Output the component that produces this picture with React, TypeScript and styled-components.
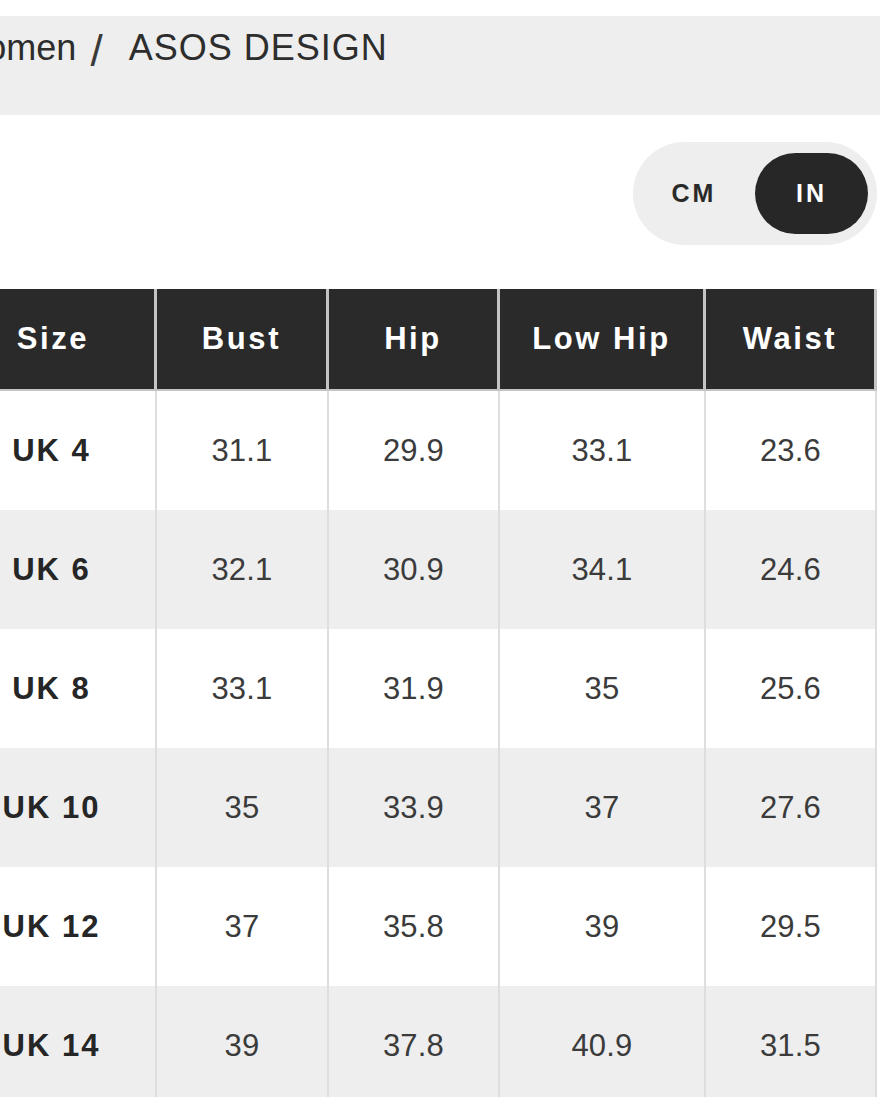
import React from "react";
import styled, { createGlobalStyle } from "styled-components";

const Global = createGlobalStyle`
  html, body { margin: 0; padding: 0; background: #ffffff; }
  body { font-family: "Liberation Sans", Arial, sans-serif; }
`;

const Viewport = styled.div`
  width: 880px;
  height: 1097px;
  overflow: hidden;
  background: #ffffff;
`;

const Inner = styled.div`
  margin-left: -52px;
  width: 932px;
  padding-top: 16px;
  display: flex;
  flex-direction: column;
`;

const Breadcrumb = styled.div`
  height: 99px;
  box-sizing: border-box;
  background: #eeeeee;
  padding: 13px 0 0 5px;
  font-size: 36px;
  line-height: 38px;
  color: #2d2d2d;
  white-space: nowrap;
  display: flex;
  align-items: flex-start;
`;

const Crumb = styled.span<{ $spacing?: string }>`
  letter-spacing: ${(p) => p.$spacing ?? "0"};
`;

const Slash = styled.span`
  font-size: 44px;
  line-height: 38px;
  font-weight: 400;
  color: #3a3a3a;
  margin: 3px 26px 0 14px;
`;

const ToggleRow = styled.div`
  display: flex;
  justify-content: flex-end;
  padding: 27px 3px 0 0;
`;

const Pill = styled.div`
  width: 244px;
  height: 103px;
  box-sizing: border-box;
  border-radius: 52px;
  background: #eeeeee;
  display: flex;
  align-items: center;
  padding-right: 9px;
`;

const Option = styled.div<{ $active?: boolean }>`
  display: flex;
  align-items: center;
  justify-content: center;
  font-weight: 700;
  font-size: 25px;
  letter-spacing: 3px;
  ${(p) =>
    p.$active
      ? `width: 113px; height: 81px; border-radius: 41px; background: #272727; color: #ffffff;`
      : `width: 122px; height: 81px; color: #2a2a2a;`}
`;

const Table = styled.div`
  margin-top: 44px;
  width: 929px;
  display: grid;
  grid-template-columns: 209px 172px 171px 206px 171px;
`;

const HeadCell = styled.div<{ $first?: boolean }>`
  height: 102px;
  box-sizing: border-box;
  background: #2a2a2a;
  border-right: 3px solid #c4c4c4;
  border-bottom: 2px solid #c4c4c4;
  color: #ffffff;
  font-weight: 700;
  font-size: 31px;
  letter-spacing: 2.6px;
  display: flex;
  align-items: center;
  justify-content: center;
  padding-left: ${(p) => (p.$first ? "4px" : "0")};
`;

const Cell = styled.div<{ $alt: boolean; $label?: boolean }>`
  height: 119px;
  box-sizing: border-box;
  background: ${(p) => (p.$alt ? "#eeeeee" : "#ffffff")};
  border-right: 2px solid #dedede;
  display: flex;
  align-items: center;
  justify-content: center;
  font-size: 31px;
  color: ${(p) => (p.$label ? "#262626" : "#3b3b3b")};
  font-weight: ${(p) => (p.$label ? 700 : 400)};
  letter-spacing: ${(p) => (p.$label ? "2px" : "0.2px")};
`;

const headers = ["Size", "Bust", "Hip", "Low Hip", "Waist"];
const rows: string[][] = [
  ["UK 4", "31.1", "29.9", "33.1", "23.6"],
  ["UK 6", "32.1", "30.9", "34.1", "24.6"],
  ["UK 8", "33.1", "31.9", "35", "25.6"],
  ["UK 10", "35", "33.9", "37", "27.6"],
  ["UK 12", "37", "35.8", "39", "29.5"],
  ["UK 14", "39", "37.8", "40.9", "31.5"],
];

export default function App() {
  return (
    <Viewport>
      <Global />
      <Inner>
        <Breadcrumb>
          <Crumb>Women</Crumb>
          <Slash>/</Slash>
          <Crumb $spacing="1px">ASOS DESIGN</Crumb>
        </Breadcrumb>
        <ToggleRow>
          <Pill>
            <Option>CM</Option>
            <Option $active>IN</Option>
          </Pill>
        </ToggleRow>
        <Table>
          {headers.map((h, i) => (
            <HeadCell key={h} $first={i === 0}>
              {h}
            </HeadCell>
          ))}
          {rows.map((r, ri) =>
            r.map((v, ci) => (
              <Cell key={`${ri}-${ci}`} $alt={ri % 2 === 1} $label={ci === 0}>
                {v}
              </Cell>
            ))
          )}
        </Table>
      </Inner>
    </Viewport>
  );
}
